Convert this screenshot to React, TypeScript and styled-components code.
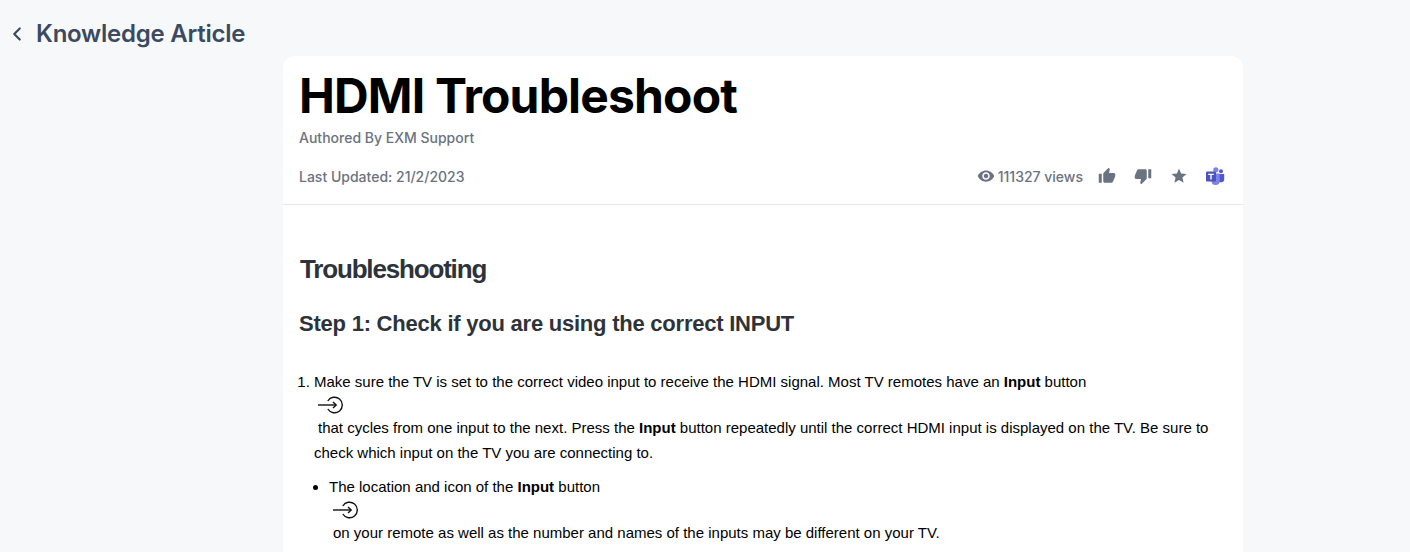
import React from "react";
import styled, { createGlobalStyle } from "styled-components";
import { FiChevronLeft } from "react-icons/fi";
import { MdVisibility, MdThumbUp, MdThumbDown, MdStar } from "react-icons/md";

const GlobalStyle = createGlobalStyle`
  html, body {
    margin: 0;
    height: 552px;
    overflow: hidden;
    background: #f7f8fa;
    font-family: Inter, sans-serif;
  }
`;

const Page = styled.div`
  height: 552px;
  overflow: hidden;
`;

const TopBar = styled.div`
  display: flex;
  align-items: center;
  height: 56px;
  padding: 11px 0 0 6px;
  box-sizing: border-box;
  color: #3b4a5f;
`;

const BackIcon = styled(FiChevronLeft)`
  width: 22px;
  height: 22px;
  margin-right: 8px;
  stroke-width: 2.4;
`;

const PageTitle = styled.h2`
  margin: 0;
  font-size: 24px;
  line-height: 28px;
  font-weight: 600;
  letter-spacing: -0.24px;
`;

const Card = styled.main`
  width: 960px;
  margin-left: 283px;
  background: #fff;
  border-radius: 12px 12px 0 0;
  min-height: 520px;
`;

const Header = styled.header`
  padding: 8px 10px 0 16px;
  height: 149px;
  box-sizing: border-box;
  border-bottom: 1px solid #e5e7eb;
`;

const Title = styled.h1`
  margin: 0;
  font-size: 48px;
  line-height: 64px;
  font-weight: 700;
  letter-spacing: -0.83px;
  color: #000;
`;

const Author = styled.div`
  font-size: 14px;
  line-height: 20px;
  font-weight: 500;
  color: #6b7280;
`;

const MetaRow = styled.div`
  display: flex;
  align-items: center;
  justify-content: space-between;
  margin-top: 18px;
  height: 20px;
  font-size: 14px;
  font-weight: 500;
  color: #6b7280;
`;

const Actions = styled.div`
  display: flex;
  align-items: center;
`;

const Views = styled.span`
  display: flex;
  align-items: center;
  gap: 3px;
  margin-right: 6px;
`;

const ActionIcon = styled.span`
  display: flex;
  justify-content: center;
  align-items: center;
  width: 36px;
  height: 20px;
  color: #6b7280;
`;

const Body = styled.article`
  padding: 46px 16px 0 16px;
  font-family: "Liberation Sans", Arial, sans-serif;
  font-size: 15px;
  line-height: 25px;
  color: #000;
`;

const SectionTitle = styled.h2`
  margin: 0 0 0 1px;
  font-size: 26px;
  line-height: 36px;
  font-weight: 700;
  letter-spacing: -1.17px;
  color: #2d3339;
`;

const StepTitle = styled.h3`
  margin: 23px 0 0;
  font-size: 22px;
  line-height: 28px;
  font-weight: 700;
  letter-spacing: -0.23px;
  color: #2d3339;
`;

const Steps = styled.ol`
  margin: 31px 0 0;
  padding: 0 0 0 15px;
`;

const Bullets = styled.ul`
  margin: 9px 0 0;
  padding: 0 0 0 15px;
  list-style-type: disc;
`;

const InlineBlock = styled.span`
  display: block;
  padding-left: 4px;
`;

const GlyphLine = styled.span`
  display: block;
  height: 21px;
  padding-left: 4px;
  line-height: 0;
`;

const InputGlyph = () => (
  <svg width="26" height="21" viewBox="0 0 26 21" fill="none" stroke="#111" strokeWidth="1.4">
    <path d="M9.8 7a7.8 7.8 0 1 1 0 8" />
    <path d="M0 11h18" />
    <path d="M15 8l3.2 3-3.2 3" />
  </svg>
);

const TeamsLogo = () => (
  <svg width="20" height="20" viewBox="0 0 20 20">
    <circle cx="16" cy="5.2" r="2" fill="#5059c9" />
    <path d="M13 8h6.2v5.2a3 3 0 0 1-3 3H13z" fill="#5059c9" />
    <circle cx="10.8" cy="3.8" r="2.6" fill="#7b83eb" />
    <path d="M6.5 7.5h8.2v7.5a4.1 4.1 0 0 1-8.2 0z" fill="#7b83eb" />
    <rect x="1" y="5.5" width="10" height="10" rx="1" fill="#4b53bc" />
    <path d="M3.2 7.8h5.6v1.3H6.7v4.4H5.3V9.1H3.2z" fill="#fff" />
  </svg>
);

export default function App() {
  return (
    <Page>
      <GlobalStyle />
      <TopBar>
        <BackIcon />
        <PageTitle>Knowledge Article</PageTitle>
      </TopBar>
      <Card>
        <Header>
          <Title>HDMI Troubleshoot</Title>
          <Author>Authored By EXM Support</Author>
          <MetaRow>
            <span>Last Updated: 21/2/2023</span>
            <Actions>
              <Views>
                <MdVisibility size={18} />
                111327 views
              </Views>
              <ActionIcon><MdThumbUp size={18} /></ActionIcon>
              <ActionIcon><MdThumbDown size={18} /></ActionIcon>
              <ActionIcon><MdStar size={18} /></ActionIcon>
              <ActionIcon><TeamsLogo /></ActionIcon>
            </Actions>
          </MetaRow>
        </Header>
        <Body>
          <SectionTitle>Troubleshooting</SectionTitle>
          <StepTitle>Step 1: Check if you are using the correct INPUT</StepTitle>
          <Steps>
            <li>
              Make sure the TV is set to the correct video input to receive the HDMI signal. Most TV remotes have an <b>Input</b> button
              <GlyphLine><InputGlyph /></GlyphLine>
              <InlineBlock>
                that cycles from one input to the next. Press the <b>Input</b> button repeatedly until the correct HDMI input is displayed on the TV. Be sure to
              </InlineBlock>
              check which input on the TV you are connecting to.
              <Bullets>
                <li>
                  The location and icon of the <b>Input</b> button
                  <GlyphLine><InputGlyph /></GlyphLine>
                  <InlineBlock>on your remote as well as the number and names of the inputs may be different on your TV.</InlineBlock>
                </li>
              </Bullets>
            </li>
          </Steps>
        </Body>
      </Card>
    </Page>
  );
}
